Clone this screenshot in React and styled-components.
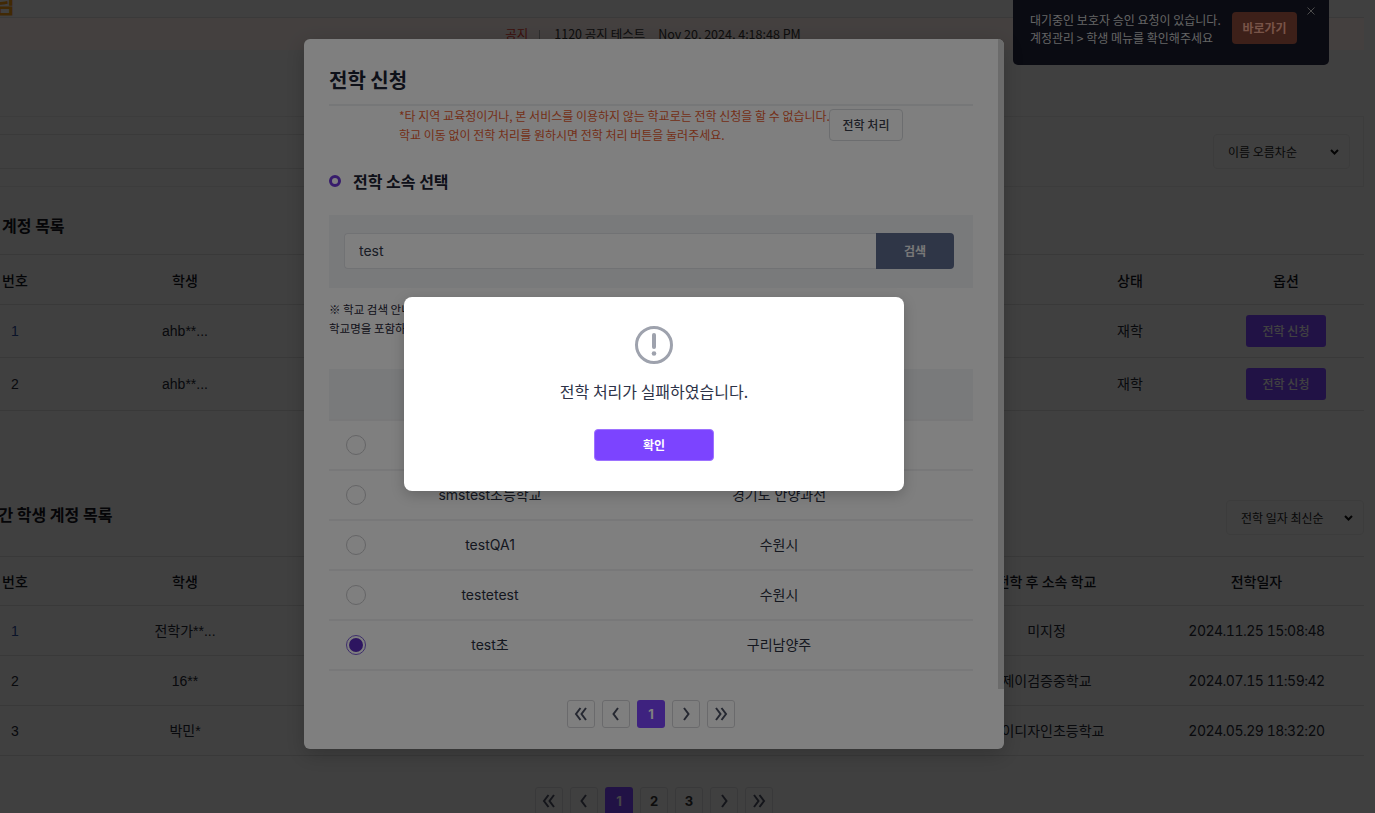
import React from "react";
import styled, { createGlobalStyle } from "styled-components";

const Global = createGlobalStyle`
  html, body { margin: 0; padding: 0; overflow: hidden; background: #eee; }
  * { box-sizing: border-box; }
  body { font-family: Inter, "Noto Sans CJK KR", sans-serif; }
`;

const Viewport = styled.div`
  position: relative;
  width: 1375px;
  height: 813px;
  overflow: hidden;
  background: #eee;
`;
const Sheet = styled.div`
  width: 1399px;
  margin-left: -35px;
  color: #1f2230;
`;
const Header = styled.header`
  height: 18px;
  overflow: hidden;
  border-bottom: 1px solid #d8d8d8;
`;
const Brand = styled.span`
  display: block;
  margin: -12px 0 0 28px;
  font: 700 24px/30px "Noto Sans CJK KR", sans-serif;
  color: #f09a10;
`;
const Banner = styled.div`
  height: 32px;
  margin-bottom: 66px;
  background: #fbeeea;
  display: flex;
  align-items: center;
  justify-content: center;
  padding-right: 23px;
  font: 400 12.5px/16px "Noto Sans CJK KR", sans-serif;
  color: #333;
`;
const NoticeTag = styled.span`
  color: #e03a30;
`;
const NoticeSep = styled.i`
  width: 1px;
  height: 9px;
  margin: 0 14px 0 11px;
  background: #aaa;
`;
const NoticeDate = styled.span`
  margin-left: 13px;
`;
const FilterCard = styled.div`
  height: 71px;
  padding: 17px 13px 0 0;
  border: 1px solid #dedede;
  border-width: 1px 1px 1px 0;
  display: flex;
  justify-content: space-between;
  margin-bottom: 11px;
`;
const FilterInput = styled.div`
  flex: 1;
  height: 35px;
  border-top: 1px solid #d8d8d8;
  border-bottom: 1px solid #d8d8d8;
  margin-right: 300px;
`;
const SortWrap = styled.div`
  position: relative;
  width: ${(p) => p.$w}px;
  height: 35px;
  color: #111;
  svg {
    position: absolute;
    right: 11px;
    top: 15px;
    pointer-events: none;
  }
`;
const Sort = styled.select`
  display: block;
  appearance: none;
  width: 100%;
  height: 100%;
  padding: 0 24px 0 14px;
  border: 1px solid #dedede;
  border-radius: 4px;
  background: #eee;
  font: 400 12px/16px "Noto Sans CJK KR", sans-serif;
  color: #222;
`;
const SectionHead = styled.div`
  height: ${(p) => p.$h}px;
  padding-top: ${(p) => p.$pt || 0}px;
  display: flex;
  align-items: center;
  justify-content: space-between;
`;
const SectionTitle = styled.h2`
  margin: 0 0 ${(p) => p.$mb || 0}px 4px;
  font: 700 16px/24px "Noto Sans CJK KR", sans-serif;
  color: #141620;
`;
const Grid = styled.div`
  display: grid;
  grid-template-columns: ${(p) => p.$cols};
  align-items: center;
  height: ${(p) => p.$h}px;
  border-bottom: 1px solid #d4d4d4;
  ${(p) => p.$top && "border-top: 1px solid #d4d4d4;"}
  text-align: center;
`;
const HeadCell = styled.div`
  font: 500 14px/20px "Noto Sans CJK KR", sans-serif;
  color: #12141d;
`;
const Cell = styled.div`
  font: 400 14px/20px Inter, "Noto Sans CJK KR", sans-serif;
  color: #222633;
  white-space: nowrap;
`;
const DateCell = styled(Cell)`
  font-variant-numeric: tabular-nums;
  letter-spacing: -0.5px;
`;
const NumCell = styled(Cell)`
  font-family: "Liberation Sans", sans-serif;
  color: ${(p) => p.$c || "#222633"};
`;
const NameCell = styled(Cell)`
  font-family: "Liberation Sans", "Noto Sans CJK KR", sans-serif;
`;
const ApplyBtn = styled.button`
  width: 80px;
  height: 32px;
  margin: 0 auto;
  display: block;
  border: 0;
  border-radius: 3px;
  background: #7c44ff;
  font: 500 12px/16px "Noto Sans CJK KR", sans-serif;
  color: #f2f2f2;
`;
const Pager = styled.nav`
  display: flex;
  justify-content: center;
  gap: 7px;
`;
const PageBtn = styled.button`
  width: 28px;
  height: 28px;
  padding: 0;
  display: flex;
  align-items: center;
  justify-content: center;
  border: 1px solid ${(p) => (p.$on ? "transparent" : "#d5d5d8")};
  border-radius: 3px;
  background: ${(p) => (p.$on ? "#7c44ff" : "transparent")};
  font: 700 13px/16px Inter, sans-serif;
  color: ${(p) => (p.$on ? "#fff" : "#333")};
`;
const PagerWrap = styled.div`
  padding: ${(p) => p.$pad};
`;

const Backdrop = styled.div`
  position: absolute;
  inset: 0;
  background: rgba(0, 0, 0, ${(p) => p.$a});
`;
const Toast = styled.aside`
  position: absolute;
  left: 1013px;
  top: 0;
  width: 316px;
  height: 65px;
  padding: 11px 0 0 17px;
  border-radius: 0 0 5px 5px;
  background: #141624;
  display: flex;
  font: 400 12px/18px "Noto Sans CJK KR", sans-serif;
  color: #c8c8c8;
`;
const ToastText = styled.p`
  margin: 0;
  width: 202px;
  white-space: nowrap;
`;
const ToastBtn = styled.button`
  width: 65px;
  height: 32px;
  margin-top: 1px;
  border: 0;
  border-radius: 4px;
  background: #7a4032;
  font: 700 12px/16px "Noto Sans CJK KR", sans-serif;
  color: #f0a890;
`;
const ToastClose = styled.button`
  position: absolute;
  right: 11px;
  top: 6px;
  padding: 0;
  width: 12px;
  height: 12px;
  border: 0;
  background: none;
  display: flex;
  color: #999;
`;

const Modal = styled.section`
  position: absolute;
  left: 304px;
  top: 39px;
  width: 700px;
  height: 710px;
  padding: 22px 31px 0 25px;
  border-radius: 6px;
  background: #fff;
  box-shadow: 0 6px 20px rgba(0, 0, 0, 0.2);
  overflow: hidden;
  color: #1c2233;
`;
const ScrollThumb = styled.div`
  position: absolute;
  right: 0;
  top: 0;
  width: 6px;
  height: 650px;
  background: #d6d6d6;
`;
const ModalTitle = styled.h1`
  margin: 0;
  height: 45px;
  border-bottom: 2px solid #eceef1;
  font: 700 20px/38px "Noto Sans CJK KR", sans-serif;
  color: #1c2233;
`;
const NoticeRow = styled.div`
  display: flex;
  padding-left: 70px;
  height: 62px;
`;
const RedNote = styled.p`
  margin: 0;
  width: 430px;
  font: 400 12px/19px "Noto Sans CJK KR", sans-serif;
  color: #e85d30;
  white-space: nowrap;
`;
const OutlineBtn = styled.button`
  width: 74px;
  height: 32px;
  margin-top: 3px;
  border: 1px solid #d8dade;
  border-radius: 4px;
  background: #fff;
  font: 500 12px/16px "Noto Sans CJK KR", sans-serif;
  color: #3a3f4d;
`;
const SubHead = styled.h3`
  margin: 0 0 21px;
  height: 26px;
  display: flex;
  align-items: center;
  gap: 12px;
  font: 700 16px/24px "Noto Sans CJK KR", sans-serif;
  color: #1c2233;
`;
const Dot = styled.i`
  width: 12px;
  height: 12px;
  border: 3px solid #6f38d8;
  border-radius: 50%;
`;
const SearchBox = styled.div`
  height: 73px;
  padding: 18px 19px 0 15px;
  background: #f3f4f7;
  display: flex;
`;
const SearchInput = styled.input`
  flex: 1;
  min-width: 0;
  height: 36px;
  padding: 0 14px 2px;
  border: 1px solid #e3e4e8;
  border-right: 0;
  border-radius: 4px 0 0 4px;
  background: #fff;
  font: 400 14px/20px Inter, sans-serif;
  color: #333a4d;
  outline: none;
`;
const SearchBtn = styled.button`
  width: 78px;
  height: 36px;
  border: 0;
  border-radius: 0 4px 4px 0;
  background: #5f6d8f;
  font: 700 12px/16px "Noto Sans CJK KR", sans-serif;
  color: #f0f0f0;
`;
const Hint = styled.p`
  margin: 0;
  height: 81px;
  padding-top: 12px;
  font: 400 11.5px/19px "Noto Sans CJK KR", sans-serif;
  color: #1c2233;
`;
const SchoolRow = styled.div`
  display: grid;
  grid-template-columns: 66px 190px 1fr;
  align-items: center;
  height: ${(p) => (p.$head ? 52 : 50)}px;
  background: ${(p) => (p.$head ? "#f3f4f7" : "transparent")};
  border-bottom: 2px solid #f0f0f2;
  text-align: center;
`;
const SchoolCell = styled.div`
  font: 400 14px/20px Inter, "Noto Sans CJK KR", sans-serif;
  color: #2a2f3f;
  white-space: nowrap;
`;
const Radio = styled.span`
  display: block;
  width: 20px;
  height: 20px;
  margin-left: 17px;
  border: ${(p) => (p.$on ? "1.5px solid #7c5cd8" : "1px solid #c9c9cc")};
  border-radius: 50%;
  padding: 2px;
  background: ${(p) => (p.$on ? "#5a2bc0" : "#fff")} content-box;
`;

const AlertBox = styled.div`
  position: absolute;
  left: 404px;
  top: 297px;
  width: 500px;
  height: 194px;
  padding-top: 28px;
  border-radius: 8px;
  background: #fff;
  box-shadow: 0 4px 14px rgba(0, 0, 0, 0.2);
  display: flex;
  flex-direction: column;
  align-items: center;
`;
const AlertMsg = styled.p`
  margin: 14px 0 26px;
  font: 400 16px/24px "Noto Sans CJK KR", sans-serif;
  color: #2d3348;
`;
const ConfirmBtn = styled.button`
  width: 120px;
  height: 32px;
  border: 1px solid #9d72ff;
  border-radius: 4px;
  background: #7c44ff;
  font: 700 12px/16px "Noto Sans CJK KR", sans-serif;
  color: #fff;
`;

const Chevron = ({ dir = "l", double }) => (
  <svg width="20" height="20" viewBox="0 0 20 20" fill="none" stroke="#4b5063" strokeWidth="2">
    {double ? (
      <>
        <path d={dir === "l" ? "M9.5 4 5 10 9.5 16" : "M10.5 4 15 10 10.5 16"} />
        <path d={dir === "l" ? "M15 4 10.5 10 15 16" : "M5 4 9.5 10 5 16"} />
      </>
    ) : (
      <path d={dir === "l" ? "M12 4 7.5 10 12 16" : "M8 4 12.5 10 8 16"} />
    )}
  </svg>
);

const SortSelect = ({ w, label }) => (
  <SortWrap $w={w}>
    <Sort defaultValue="a"><option value="a">{label}</option></Sort>
    <svg width="9" height="6" viewBox="0 0 9 6" fill="none" stroke="currentColor" strokeWidth="2">
      <path d="M1 1l3.5 3.5L8 1" />
    </svg>
  </SortWrap>
);

const Pagination = ({ pages }) => (
  <Pager>
    <PageBtn><Chevron dir="l" double /></PageBtn>
    <PageBtn><Chevron dir="l" /></PageBtn>
    {pages.map((n) => (
      <PageBtn key={n} $on={n === 1}>{n}</PageBtn>
    ))}
    <PageBtn><Chevron dir="r" /></PageBtn>
    <PageBtn><Chevron dir="r" double /></PageBtn>
  </Pager>
);

const COLS_A = "100px 240px 747px 156px 156px";
const COLS_B = "100px 240px 639px 205px 215px";
const transfers = [
  ["1", "전학가**...", "미지정", "2024.11.25 15:08:48"],
  ["2", "16**", "제이검증중학교", "2024.07.15 11:59:42"],
  ["3", "박민*", "아이디자인초등학교", "2024.05.29 18:32:20"],
];
const schools = [
  ["smstest", "서울시"],
  ["smstest초등학교", "경기도 안양과천"],
  ["testQA1", "수원시"],
  ["testetest", "수원시"],
  ["test초", "구리남양주"],
];

export default function App() {
  return (
    <Viewport>
      <Global />
      <Sheet>
        <Header><Brand>님</Brand></Header>
        <Banner>
          <NoticeTag>공지</NoticeTag>
          <NoticeSep />
          <span>1120 공지 테스트</span>
          <NoticeDate>Nov 20, 2024, 4:18:48 PM</NoticeDate>
        </Banner>
        <FilterCard>
          <FilterInput />
          <SortSelect w={137} label="이름 오름차순" />
        </FilterCard>
        <SectionHead $h={56}><SectionTitle $mb={2}>학생 계정 목록</SectionTitle></SectionHead>
        <Grid $cols={COLS_A} $h={51} $top>
          <HeadCell>번호</HeadCell><HeadCell>학생</HeadCell><span />
          <HeadCell>상태</HeadCell><HeadCell>옵션</HeadCell>
        </Grid>
        {["1", "2"].map((n) => (
          <Grid key={n} $cols={COLS_A} $h={53}>
            <NumCell $c={n === "1" ? "#2a4a9a" : undefined}>{n}</NumCell>
            <NameCell>ahb**...</NameCell><span />
            <Cell>재학</Cell>
            <div><ApplyBtn>전학 신청</ApplyBtn></div>
          </Grid>
        ))}
        <SectionHead $h={145} $pt={68}>
          <SectionTitle $mb={7}>학교간 학생 계정 목록</SectionTitle>
          <SortSelect w={138} label="전학 일자 최신순" />
        </SectionHead>
        <Grid $cols={COLS_B} $h={50} $top>
          <HeadCell>번호</HeadCell><HeadCell>학생</HeadCell><span />
          <HeadCell>전학 후 소속 학교</HeadCell><HeadCell>전학일자</HeadCell>
        </Grid>
        {transfers.map(([n, name, school, date]) => (
          <Grid key={n} $cols={COLS_B} $h={50}>
            <NumCell $c={n === "1" ? "#2a4a9a" : undefined}>{n}</NumCell>
            <NameCell>{name}</NameCell><span />
            <Cell>{school}</Cell>
            <DateCell>{date}</DateCell>
          </Grid>
        ))}
        <PagerWrap $pad="31px 21px 0 0"><Pagination pages={[1, 2, 3]} /></PagerWrap>
      </Sheet>

      <Backdrop $a={0.46} />
      <Toast>
        <ToastText>대기중인 보호자 승인 요청이 있습니다.<br />계정관리 &gt; 학생 메뉴를 확인해주세요</ToastText>
        <ToastBtn>바로가기</ToastBtn>
        <ToastClose>
          <svg width="10" height="10" viewBox="0 0 10 10" stroke="currentColor" strokeWidth="1"><path d="M1.5 1.5l7 7M8.5 1.5l-7 7" /></svg>
        </ToastClose>
      </Toast>

      <Modal>
        <ModalTitle>전학 신청</ModalTitle>
        <NoticeRow>
          <RedNote>
            *타 지역 교육청이거나, 본 서비스를 이용하지 않는 학교로는 전학 신청을 할 수 없습니다.<br />
            학교 이동 없이 전학 처리를 원하시면 전학 처리 버튼을 눌러주세요.
          </RedNote>
          <OutlineBtn>전학 처리</OutlineBtn>
        </NoticeRow>
        <SubHead><Dot />전학 소속 선택</SubHead>
        <SearchBox>
          <SearchInput value="test" readOnly />
          <SearchBtn>검색</SearchBtn>
        </SearchBox>
        <Hint>※ 학교 검색 안내<br />학교명을 포함하여 검색해주세요.</Hint>
        <SchoolRow $head><span /><SchoolCell>학교명</SchoolCell><SchoolCell>지역</SchoolCell></SchoolRow>
        {schools.map(([s, r], i) => (
          <SchoolRow key={s}>
            <Radio $on={i === 4} />
            <SchoolCell>{s}</SchoolCell>
            <SchoolCell>{r}</SchoolCell>
          </SchoolRow>
        ))}
        <PagerWrap $pad="29px 0 0 0"><Pagination pages={[1]} /></PagerWrap>
        <ScrollThumb />
      </Modal>

      <Backdrop $a={0.5} />
      <AlertBox>
        <svg width="40" height="40" viewBox="0 0 40 40" fill="none">
          <circle cx="20" cy="20" r="17.5" stroke="#9ea2ad" strokeWidth="3" />
          <path d="M20 10v12" stroke="#9ea2ad" strokeWidth="4" strokeLinecap="round" />
          <circle cx="20" cy="28.5" r="2.3" fill="#9ea2ad" />
        </svg>
        <AlertMsg>전학 처리가 실패하였습니다.</AlertMsg>
        <ConfirmBtn>확인</ConfirmBtn>
      </AlertBox>
    </Viewport>
  );
}
